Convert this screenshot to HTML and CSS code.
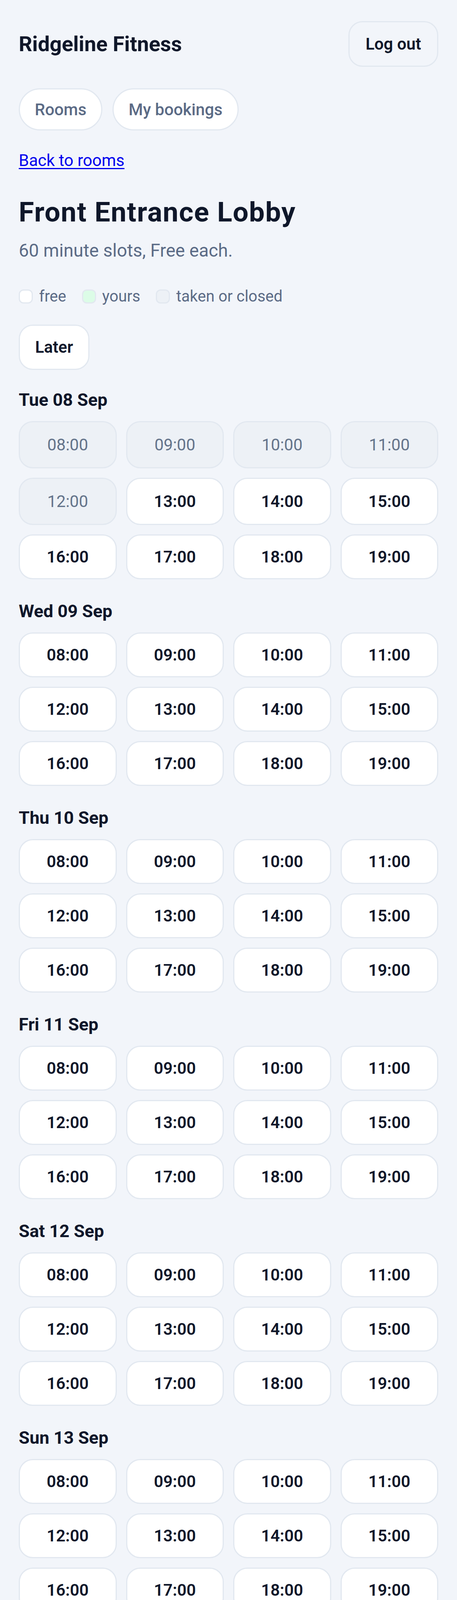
FILE: index.html
```html
<!DOCTYPE html>
<html lang="en">
<head>
<meta charset="utf-8">
<title>Front Entrance Lobby · Ridgeline Fitness</title>
<link rel="stylesheet" href="styles.css">
</head>
<body>
<header class="topbar">
  <div class="brand">Ridgeline Fitness</div>
  <button class="btn btn-ghost" type="button">Log out</button>
</header>
<nav class="tabs">
  <a class="pill" href="#">Rooms</a>
  <a class="pill" href="#">My bookings</a>
</nav>
<main class="page">
  <p class="back-row"><a class="back" href="#">Back to rooms</a></p>
  <h1 class="room-title">Front Entrance Lobby</h1>
  <p class="sub">60 minute slots, Free each.</p>
  <ul class="legend">
    <li class="legend-item"><span class="swatch swatch-free"></span>free</li>
    <li class="legend-item"><span class="swatch swatch-yours"></span>yours</li>
    <li class="legend-item"><span class="swatch swatch-taken"></span>taken or closed</li>
  </ul>
  <div class="pager"><button class="btn btn-white" type="button">Later</button></div>
  <div id="days"></div>
</main>
<script src="app.js"></script>
</body>
</html>
```
FILE: app.js
```js
(function () {
  var days = ["Tue 08 Sep", "Wed 09 Sep", "Thu 10 Sep", "Fri 11 Sep", "Sat 12 Sep", "Sun 13 Sep", "Mon 14 Sep"];
  var hours = ["08:00", "09:00", "10:00", "11:00", "12:00", "13:00", "14:00", "15:00", "16:00", "17:00", "18:00", "19:00"];
  var taken = { "Tue 08 Sep": ["08:00", "09:00", "10:00", "11:00", "12:00"] };
  var root = document.getElementById("days");
  days.forEach(function (d) {
    var sec = document.createElement("section");
    sec.className = "day";
    var h = document.createElement("h2");
    h.className = "day-title";
    h.textContent = d;
    sec.appendChild(h);
    var grid = document.createElement("div");
    grid.className = "slots";
    hours.forEach(function (t) {
      var isTaken = (taken[d] || []).indexOf(t) !== -1;
      var el = document.createElement(isTaken ? "div" : "button");
      el.className = isTaken ? "slot slot-taken" : "slot";
      el.textContent = t;
      grid.appendChild(el);
    });
    sec.appendChild(grid);
    root.appendChild(sec);
  });
})();
```
FILE: styles.css
```css
html, body {
  margin: 0;
  padding: 0;
}
body {
  background: #f2f5fa;
  color: #0f172a;
  font-family: Roboto, "Noto Sans", sans-serif;
  padding: 0 48px 180px;
}
.topbar {
  display: flex;
  align-items: center;
  justify-content: space-between;
  padding-top: 54px;
}
.brand {
  font-size: 54px;
  line-height: 84px;
  font-weight: 700;
  color: #0f172a;
}
.btn {
  font-family: inherit;
  font-size: 42px;
  line-height: 57px;
  font-weight: 600;
  color: #0f172a;
  border: 3px solid #e2e8f0;
  border-radius: 36px;
  padding: 27px 41px;
  margin: 0;
  cursor: pointer;
}
.btn-ghost {
  background: #f2f5fa;
}
.btn-white {
  background: #ffffff;
  padding: 26.5px 39px;
}
.tabs {
  display: flex;
  gap: 26px;
  margin-top: 55px;
}
.pill {
  display: block;
  font-size: 42px;
  line-height: 57px;
  font-weight: 500;
  color: #5b6b86;
  text-decoration: none;
  background: #ffffff;
  border: 3px solid #e2e8f0;
  border-radius: 999px;
  padding: 22.5px 38px;
}
.page {
  display: block;
}
.back-row {
  margin: 47px 0 0;
  font-size: 42px;
  line-height: 60px;
}
.back {
  color: #0000ee;
  text-decoration: underline;
  text-decoration-thickness: 3px;
  text-underline-offset: 5px;
}
.room-title {
  margin: 56.5px 0 0;
  font-size: 71px;
  line-height: 90px;
  font-weight: 700;
  letter-spacing: 1.6px;
  color: #0f172a;
}
.sub {
  margin: 20px 0 0;
  font-size: 46px;
  line-height: 66px;
  color: #5b6b86;
}
.legend {
  list-style: none;
  margin: 58px 0 0;
  padding: 0;
  display: flex;
  align-items: center;
  gap: 40px;
}
.legend-item {
  display: flex;
  align-items: center;
  gap: 16px;
  font-size: 40px;
  line-height: 54px;
  color: #5b6b86;
}
.swatch {
  display: block;
  width: 30px;
  height: 30px;
  border: 3px solid #e2e8f0;
  border-radius: 12px;
}
.swatch-free {
  background: #ffffff;
}
.swatch-yours {
  background: #dcfce7;
}
.swatch-taken {
  background: #edf1f6;
}
.pager {
  display: flex;
  margin-top: 45px;
}
.day {
  margin-top: 47.5px;
}
.day + .day {
  margin-top: 52.5px;
}
.day-title {
  margin: 0 0 23.5px;
  font-size: 45px;
  line-height: 60px;
  font-weight: 700;
  color: #0f172a;
}
.slots {
  display: grid;
  grid-template-columns: repeat(4, 1fr);
  gap: 24px;
}
.slot {
  display: flex;
  align-items: center;
  justify-content: center;
  min-height: 115px;
  box-sizing: border-box;
  margin: 0;
  padding: 0;
  font-family: inherit;
  font-size: 42px;
  line-height: 57px;
  font-weight: 600;
  color: #0f172a;
  background: #ffffff;
  border: 3px solid #e2e8f0;
  border-radius: 36px;
  cursor: pointer;
}
.slot-taken {
  min-height: 121px;
  font-weight: 400;
  color: #64748b;
  background: #edf1f6;
  cursor: default;
}
```
